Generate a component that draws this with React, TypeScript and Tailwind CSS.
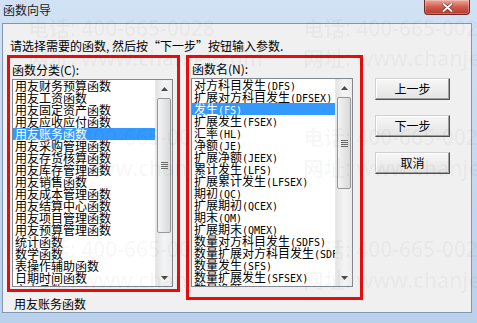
import React from 'react';

const CATEGORIES = [
  '用友财务预算函数',
  '用友工资函数',
  '用友固定资产函数',
  '用友应收应付函数',
  '用友账务函数',
  '用友采购管理函数',
  '用友存货核算函数',
  '用友库存管理函数',
  '用友销售函数',
  '用友成本管理函数',
  '用友结算中心函数',
  '用友项目管理函数',
  '用友预算管理函数',
  '统计函数',
  '数学函数',
  '表操作辅助函数',
  '日期时间函数',
  '文本函数',
];

const FUNCS: [string, string][] = [
  ['对方科目发生', '(DFS)'],
  ['扩展对方科目发生', '(DFSEX)'],
  ['发生', '(FS)'],
  ['扩展发生', '(FSEX)'],
  ['汇率', '(HL)'],
  ['净额', '(JE)'],
  ['扩展净额', '(JEEX)'],
  ['累计发生', '(LFS)'],
  ['扩展累计发生', '(LFSEX)'],
  ['期初', '(QC)'],
  ['扩展期初', '(QCEX)'],
  ['期末', '(QM)'],
  ['扩展期末', '(QMEX)'],
  ['数量对方科目发生', '(SDFS)'],
  ['数量扩展对方科目发生', '(SDFSEX)'],
  ['数量发生', '(SFS)'],
  ['数量扩展发生', '(SFSEX)'],
  ['数量净额', '(SJE)'],
];

const WATERMARKS: { cls: string; text: string }[] = [
  { cls: 'top-[18px] left-[28px]', text: '电话: 400-665-0028' },
  { cls: 'top-[18px] left-[303px]', text: '电话: 400-665-0028' },
  { cls: 'top-[48px] left-[28px]', text: '网址: www.chanjet.com' },
  { cls: 'top-[48px] left-[303px]', text: '网址: www.chanjet.com' },
  { cls: 'top-[127px] left-[28px]', text: '电话: 400-665-0028' },
  { cls: 'top-[127px] left-[303px]', text: '电话: 400-665-0028' },
  { cls: 'top-[158px] left-[28px]', text: '网址: www.chanjet.com' },
  { cls: 'top-[158px] left-[303px]', text: '网址: www.chanjet.com' },
  { cls: 'top-[239px] left-[28px]', text: '电话: 400-665-0028' },
  { cls: 'top-[239px] left-[303px]', text: '电话: 400-665-0028' },
  { cls: 'top-[270px] left-[28px]', text: '网址: www.chanjet.com' },
  { cls: 'top-[270px] left-[303px]', text: '网址: www.chanjet.com' },
];

function Arrow({ down }: { down?: boolean }) {
  return (
    <div className="h-[17px] flex items-center justify-center shrink-0">
      <svg width="7" height="4" viewBox="0 0 7 4">
        {down ? <path d="M0 0h7L3.5 4z" fill="#4a4a4a" /> : <path d="M0 4h7L3.5 0z" fill="#4a4a4a" />}
      </svg>
    </div>
  );
}

function ScrollBar({ thumb }: { thumb: string }) {
  return (
    <div className="w-[17px] h-full shrink-0 flex flex-col bg-gradient-to-r from-[#e4e4e4] via-[#f4f4f4] to-[#ececec] border-l border-[#e9e9e9]">
      <Arrow />
      <div className={`mt-[1px] mx-[1px] rounded-[2px] border border-[#979797] bg-gradient-to-r from-[#f4f4f4] to-[#d9d9d9] flex items-center justify-center shrink-0 ${thumb}`}>
        <svg width="7" height="7" viewBox="0 0 7 7">
          <path d="M0 0.5h7M0 2.5h7M0 4.5h7M0 6.5h7" stroke="#6b6b6b" strokeWidth="1" />
        </svg>
      </div>
      <div className="flex-1" />
      <Arrow down />
    </div>
  );
}

function Row({ selected, children }: { selected?: boolean; children: React.ReactNode }) {
  return (
    <div className={`h-[12px] leading-[12px] pl-[2px] whitespace-nowrap shrink-0 ${selected ? 'bg-[#3399ff] text-white' : 'text-black'}`}>
      {children}
    </div>
  );
}

function Button({ label }: { label: string }) {
  return (
    <button className="w-[75px] h-[22px] text-[12px] leading-[14px] text-black bg-gradient-to-b from-[#f7f7f7] to-[#e3e3e3] border border-t-[#d0d0d0] border-l-[#d0d0d0] border-r-[#505050] border-b-[#505050] shadow-[inset_-1px_-1px_0_#a0a0a0,inset_1px_1px_0_#ffffff]">
      {label}
    </button>
  );
}

export default function App() {
  return (
    <div className="w-[477px] h-[323px] relative overflow-hidden flex flex-col bg-gradient-to-b from-[#d2e2f5] to-[#bad1ec] font-['Noto_Sans_CJK_SC',sans-serif] text-[12px] text-black">
      {/* title bar */}
      <div className="h-[23px] shrink-0 flex items-start justify-between">
        <span className="pl-[3px] pt-[3px] leading-[14px] text-[#1b1b1b]">函数向导</span>
        <div className="mr-[7px] w-[46px] h-[15px] rounded-b-[4px] border border-t-0 border-[#6e2a22] bg-gradient-to-b from-[#e9a89c] via-[#d15b4c] to-[#b9372a] flex items-center justify-center shadow-[inset_0_0_0_1px_rgba(255,255,255,0.25)]">
          <svg width="11" height="9" viewBox="0 0 11 9">
            <path d="M1.5 1l8 7M9.5 1l-8 7" stroke="#5a1c16" strokeWidth="3" strokeLinecap="round" />
            <path d="M1.5 1l8 7M9.5 1l-8 7" stroke="#ffffff" strokeWidth="2" strokeLinecap="round" />
          </svg>
        </div>
      </div>

      {/* client area */}
      <div className="ml-[2px] mr-[5px] h-[290px] shrink-0 border border-[#8096b1] bg-[#f0f0f0] flex flex-col">
        <div className="pl-[7px] pt-[15px] h-[29px] leading-[14px] whitespace-nowrap">
          请选择需要的函数, 然后按“下一步”按钮输入参数.
        </div>

        <div className="mt-[2px] pl-[4px] flex items-start">
          {/* categories */}
          <div className="w-[173px] shrink-0 flex flex-col">
            <div className="h-[237px] border-[3px] border-[#e60d0d] flex flex-col">
              <div className="pl-[2px] pt-[5px] leading-[14px]">函数分类(C):</div>
              <div className="mt-[2px] ml-[2px] w-[161px] h-[208px] border border-[#828790] bg-white flex">
                <div className="flex-1 flex flex-col overflow-hidden">
                  {CATEGORIES.map((c, i) => (
                    <Row key={c} selected={i === 4}>{c}</Row>
                  ))}
                </div>
                <ScrollBar thumb="h-[135px]" />
              </div>
            </div>
            <div className="pl-[7px] mt-[5px] leading-[14px]">用友账务函数</div>
          </div>

          {/* functions */}
          <div className="ml-[6px] w-[177px] h-[245px] shrink-0 border-[3px] border-[#e60d0d] flex flex-col">
            <div className="pl-[3px] pt-[4px] leading-[14px]">函数名(N):</div>
            <div className="mt-[2px] ml-[2px] w-[162px] h-[209px] border border-[#828790] bg-white flex">
              <div className="flex-1 flex flex-col overflow-hidden">
                {FUNCS.map(([name, code], i) => (
                  <Row key={code} selected={i === 2}>
                    {name}
                    <span className="font-['DejaVu_Sans_Mono',monospace] text-[10px]">{code}</span>
                  </Row>
                ))}
              </div>
              <ScrollBar thumb="h-[92px]" />
            </div>
          </div>

          {/* buttons */}
          <div className="ml-[12px] pt-[23px] flex flex-col gap-[15px]">
            <Button label="上一步" />
            <Button label="下一步" />
            <Button label="取消" />
          </div>
        </div>
      </div>

      {/* watermark overlay */}
      {WATERMARKS.map((w, i) => (
        <span
          key={i}
          className={`absolute z-10 pointer-events-none whitespace-nowrap font-['Open_Sans','Noto_Sans_CJK_SC',sans-serif] font-semibold text-[21px] leading-[21px] text-black/[0.04] ${w.cls}`}
        >
          {w.text}
        </span>
      ))}
    </div>
  );
}
